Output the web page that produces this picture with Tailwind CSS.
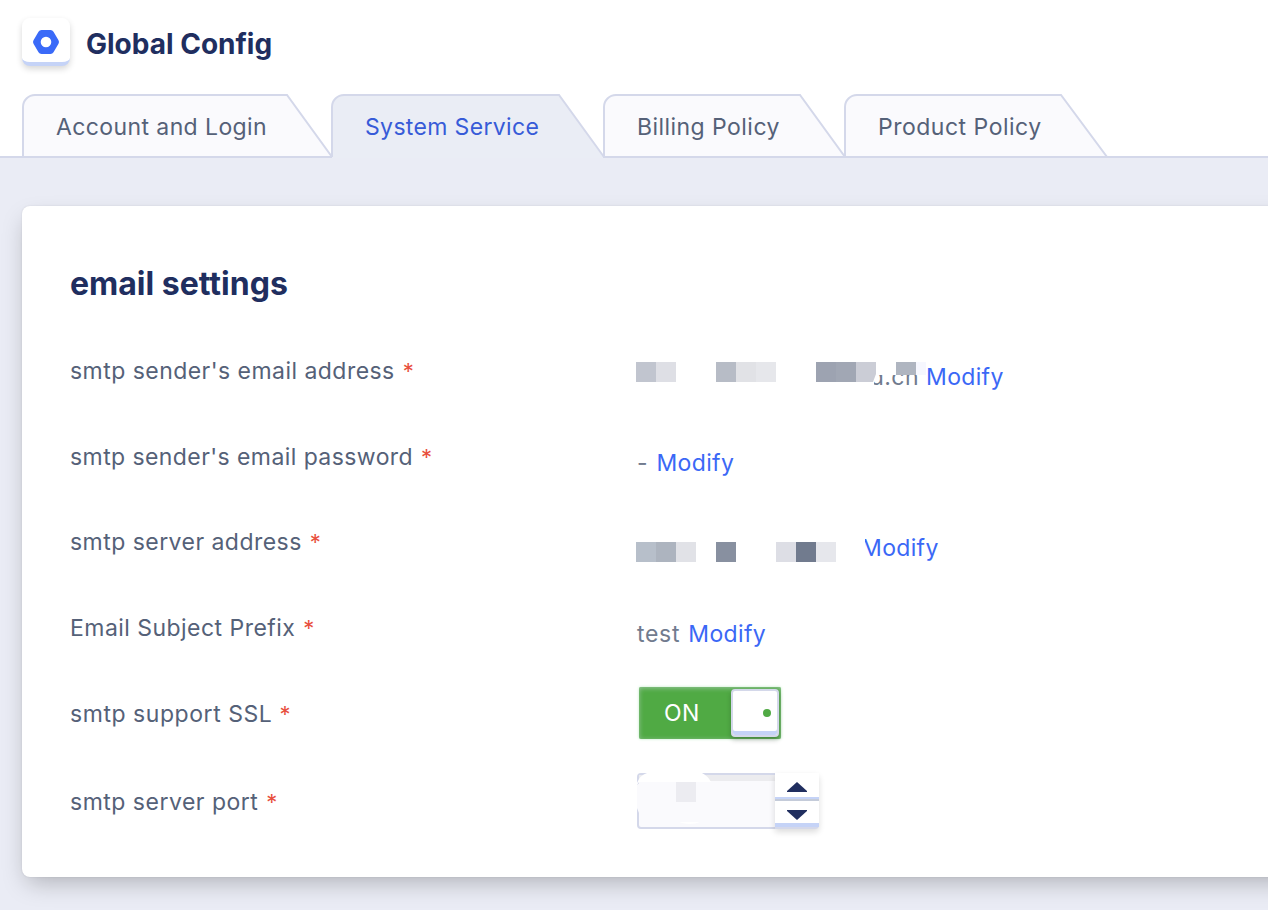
<!DOCTYPE html>
<html lang="en">
<head>
<meta charset="utf-8">
<title>Global Config</title>
<script src="https://cdn.jsdelivr.net/npm/@tailwindcss/browser@4"></script>
</head>
<body class="h-[910px] overflow-hidden bg-[#eaecf5] font-['Inter','Liberation_Sans',sans-serif] text-[23px] text-[#556178]">
<header class="flex h-[158px] flex-col border-b-2 border-[#d4d8ea] bg-white">
  <div class="flex h-[94px] shrink-0 items-start pl-[22px] pt-[18px]">
    <div class="flex h-12 w-12 justify-center rounded-[8px] border-b-4 border-[#c5d3f7] bg-white pt-3 shadow-[0_3px_6px_rgba(0,0,0,0.16)]">
      <svg class="h-6 w-[28px]" viewBox="0 0 28 24"><path fill="#3a6af8" fill-rule="evenodd" d="M9.500 0H18.500Q20.500 0 21.500 1.800L26.500 10.200Q27.500 12 26.500 13.800L21.500 22.200Q20.500 24 18.500 24H9.500Q7.500 24 6.500 22.200L1.500 13.800Q.5 12 1.500 10.200L6.500 1.800Q7.500 0 9.500 0ZM14 6.700a5.300 5.300 0 1 0 0 10.600a5.300 5.300 0 1 0 0-10.600Z"/></svg>
    </div>
    <h1 class="ml-4 text-[28px] leading-[53px] font-bold tracking-[0px] text-[#202e5f]">Global Config</h1>
  </div>
  <nav class="flex h-16 shrink-0 pl-[22px] leading-[66px] whitespace-nowrap">
    <a class="relative w-[309px] pl-[34px] tracking-[0.4px]"><svg class="absolute top-0 left-0 h-16 w-[312px]" viewBox="0 0 312 64"><path fill="#fafafd" stroke="#d4d8ea" stroke-width="2" d="M1 63V13A12 12 0 0 1 13 1H265L310 63Z"/></svg><span class="relative">Account and Login</span></a>
    <a class="relative w-[272px] pl-[34px] tracking-[0.35px] text-[#375bd8]"><svg class="absolute top-0 left-0 h-16 w-[275px]" viewBox="0 0 275 64"><path fill="#eaedf5" d="M1 64V13A12 12 0 0 1 13 1H228L273 64Z"/><path fill="none" stroke="#d4d8ea" stroke-width="2" d="M1 63V13A12 12 0 0 1 13 1H228L273 63"/></svg><span class="relative">System Service</span></a>
    <a class="relative w-[241px] pl-[34px] tracking-[0.45px]"><svg class="absolute top-0 left-0 h-16 w-[244px]" viewBox="0 0 244 64"><path fill="#fafafd" stroke="#d4d8ea" stroke-width="2" d="M1 63V13A12 12 0 0 1 13 1H197L242 63Z"/></svg><span class="relative">Billing Policy</span></a>
    <a class="relative w-[263px] pl-[34px] tracking-[0.5px]"><svg class="absolute top-0 left-0 h-16 w-[265px]" viewBox="0 0 265 64"><path fill="#fafafd" stroke="#d4d8ea" stroke-width="2" d="M1 63V13A12 12 0 0 1 13 1H217L263 63Z"/></svg><span class="relative">Product Policy</span></a>
  </nav>
</header>
<main class="mt-12 -mr-10 ml-[22px] h-[671px] rounded-[8px] bg-white pt-[51px] pl-12 shadow-[0_10px_24px_-5px_rgba(0,0,0,0.26),0_0_2px_rgba(0,0,0,0.1)]">
  <h2 class="h-[91px] text-[32px] leading-[53px] font-bold tracking-[0px] text-[#202e5f]">email settings</h2>
  <div class="grid grid-cols-[566px_1fr] grid-rows-[86px_85px_86px_86px_88px_60px] leading-[46px] tracking-[0.46px] whitespace-nowrap">
    <div>smtp sender's email address <span class="pl-px text-[22px] leading-none text-[#e84f3d]">*</span></div>
    <div class="flex pt-[6px]">
      <span class="relative w-[290px] overflow-hidden pr-[7px] text-right text-[#717b8e]">d.cn
        <svg class="absolute top-0 left-0 h-[46px] w-[290px]" viewBox="0 0 290 46"><path fill="#fff" d="M180 0H290V21H242V27Q240 31 238 26V40H180Z"/><path fill="#c1c5cf" d="M0 8h20v20H0z"/><path fill="#dedfe5" d="M20 8h20v20H20z"/><path fill="#b7bcc6" d="M80 8h20v20H80z"/><path fill="#e1e2e6" d="M100 8h20v20h-20z"/><path fill="#e6e7eb" d="M120 8h20v20h-20z"/><path fill="#9da3b1" d="M180 8h20v20h-20z"/><path fill="#a1a7b4" d="M200 8h20v20h-20z"/><path fill="#cbcdd6" d="M220 8h20v12l-3 8h-17z"/><path fill="#afb5c0" d="M260 8h20v13h-20z"/><path fill="#f6f7fe" d="M280 8h10v13h-10z"/></svg>
      </span>
      <a class="tracking-[0.35px] text-[#3b68f6]">Modify</a>
    </div>
    <div class="tracking-[0.42px]">smtp sender's email password <span class="pl-px text-[22px] leading-none text-[#e84f3d]">*</span></div>
    <div class="pt-[6px] pl-px text-[#717b8e]">- <a class="pl-[1.5px] tracking-[0.35px] text-[#3b68f6]">Modify</a></div>
    <div>smtp server address <span class="pl-px text-[22px] leading-none text-[#e84f3d]">*</span></div>
    <div class="flex pt-[6px]">
      <svg class="h-[46px] w-[225px]" viewBox="0 0 225 46"><path fill="#b7bfca" d="M0 17h20v20H0z"/><path fill="#adb4bf" d="M20 17h20v20H20z"/><path fill="#e1e2e7" d="M40 17h20v20H40z"/><path fill="#8890a0" d="M80 17h20v20H80z"/><path fill="#dddee5" d="M140 17h20v20h-20z"/><path fill="#717b8e" d="M160 17h20v20h-20z"/><path fill="#e6e7ec" d="M180 17h20v20h-20z"/></svg>
      <a class="relative tracking-[0.35px] text-[#3b68f6]">Modify<svg class="absolute top-0 left-0 h-[46px] w-[8px]" viewBox="0 0 8 46"><path fill="#fff" d="M0 10H4V17L8 34H0Z"/></svg></a>
    </div>
    <div>Email Subject Prefix <span class="pl-px text-[22px] leading-none text-[#e84f3d]">*</span></div>
    <div class="pt-[6px] pl-[1px] tracking-[0.7px] text-[#717b8e]">test <a class="pl-px tracking-[0.35px] text-[#3b68f6]">Modify</a></div>
    <div class="tracking-[0.55px]">smtp support SSL <span class="text-[22px] leading-none text-[#e84f3d]">*</span></div>
    <div class="-mt-[4px] pl-[3px]">
      <div class="flex h-[52px] w-[142px] rounded-[2px] bg-[#50aa44] pt-[2px] pl-[25px] leading-[49px] tracking-[0.5px] text-white shadow-[inset_0_1px_5px_rgba(160,200,165,0.9),0_0_3px_#bdeac3]">
        <span class="w-[67px]">ON</span>
        <span class="flex h-12 w-12 items-center justify-end rounded-[4px] border-2 border-[#d4d8ea] bg-white pr-[6px] shadow-[inset_0_-4px_0_#c5d3f7,0_3px_5px_rgba(0,0,0,0.22)]"><i class="h-2 w-2 rounded-full bg-[#50aa44]"></i></span>
      </div>
    </div>
    <div class="tracking-[0.5px]">smtp server port <span class="pl-px text-[22px] leading-none text-[#e84f3d]">*</span></div>
    <div class="-mt-[6px] flex pl-px">
      <svg class="h-14 w-[138px]" viewBox="0 0 138 56"><path fill="#fafafd" stroke="#d4d8ea" stroke-width="2" d="M140 1H4Q1 1 1 4V52Q1 55 4 55H140Z"/><path fill="#ececef" d="M2 2H138V8H2Z"/><path fill="#fff" d="M0 10Q3 2 10 0H65Q71 3 74 9H2L0 12Z"/><path fill="#fafafd" d="M0 12L4 9H20V40H2L0 35Z"/><path fill="#ececf1" d="M39 9h20v20H39z"/><path fill="#fff" d="M42 49H63Q53 53 42 49Z"/></svg>
      <div class="flex h-14 w-11 flex-col rounded-r-[4px] border-b-2 border-[#d4d8ea] bg-white shadow-[0_3px_6px_rgba(0,0,0,0.14)]">
        <div class="flex h-7 justify-center border-b-2 border-[#c4cbd9] bg-white pt-[9px] shadow-[inset_0_-2px_0_#c5d3f7]"><svg class="h-[10px] w-5" viewBox="0 0 20 10"><path fill="#202e5f" d="M0 10V9L10 0L20 9V10Z"/></svg></div>
        <div class="flex h-[26px] justify-center border-b-4 border-[#c5d3f7] bg-white pt-[9px]"><svg class="h-[10px] w-5" viewBox="0 0 20 10"><path fill="#202e5f" d="M0 0H20V1L10 10L0 1Z"/></svg></div>
      </div>
    </div>
  </div>
</main>
</body>
</html>
